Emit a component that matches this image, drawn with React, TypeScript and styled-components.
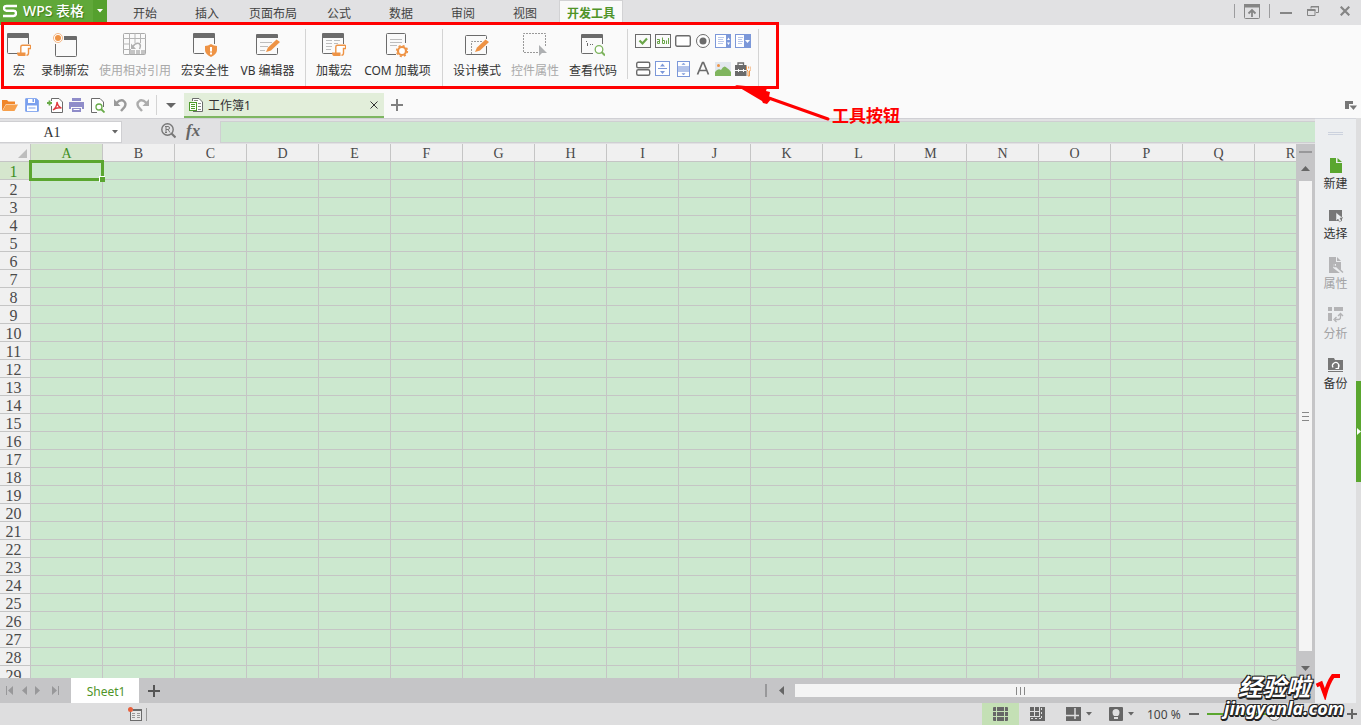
import React from "react";
import styled, { createGlobalStyle, css } from "styled-components";

const ui = '"Noto Sans", "Noto Sans CJK SC", sans-serif';
const GRAY = "#6b6b6b";
const ORANGE = "#ee9345";
const GREEN = "#5aa62f";
const LINE = "#c5c5c5";
const CELL = "#cce8cf";

const Global = createGlobalStyle`
  *, *::before, *::after { box-sizing: border-box; }
  body { margin: 0; font-family: ${ui}; font-size: 12px; color: #333; overflow: hidden; }
  button, input { font: inherit; color: inherit; margin: 0; padding: 0; border: 0; border-radius: 0; background: none; }
  svg { display: block; flex: none; }
`;

const Shell = styled.div`
  position: relative;
  display: flex;
  flex-direction: column;
  height: 100vh;
  overflow: hidden;
  background: #dededf;
`;

/* ---- title bar ---- */
const TitleBar = styled.header`
  display: flex;
  height: 25px;
  flex: none;
  background: #e1e1e3;
`;
const Brand = styled.button`
  display: flex;
  align-items: center;
  gap: 6px;
  width: 93px;
  height: 25px;
  padding: 0 0 4px 3px;
  background: #60a839;
  color: #fff;
  font-size: 14px;
  line-height: 20px;
  font-weight: 500;
  white-space: nowrap;
  text-shadow: 1px 1px 1px #3d7a1c;
`;
const BrandArrow = styled.button`
  display: flex;
  align-items: center;
  justify-content: center;
  width: 14px;
  padding-bottom: 3px;
  background: #55a02e;
`;
const MenuTabs = styled.nav`
  display: flex;
  flex: 1;
  padding: 1px 0 0 7px;
`;
const MenuTab = styled.button<{ $wide?: boolean; $active?: boolean }>`
  width: ${(p) => (p.$wide ? 62 : 54)}px;
  margin: 0 4px;
  padding-top: 2px;
  line-height: 22px;
  white-space: nowrap;
  color: #444;
  ${(p) =>
    p.$active &&
    css`
      background: #fafafa;
      box-shadow: 0 0 0 1px #d2d2d4;
      color: #4f9428;
      font-weight: 700;
    `}
`;
const WindowControls = styled.div`
  display: flex;
  align-items: center;
  height: 22px;
`;
const ControlButton = styled.button<{ $w: number }>`
  display: flex;
  align-items: center;
  justify-content: center;
  width: ${(p) => p.$w}px;
  height: 22px;
  &:last-child {
    margin-left: 4px;
  }
`;
const VRule = styled.span<{ $h: number; $m?: string; $c?: string }>`
  flex: none;
  width: 1px;
  height: ${(p) => p.$h}px;
  margin: ${(p) => p.$m ?? "0"};
  background: ${(p) => p.$c ?? "#d4d4d4"};
`;

/* ---- ribbon ---- */
const Ribbon = styled.div`
  display: flex;
  flex: none;
  height: 65px;
  padding: 4px 0 0 2px;
  background: #fafafa;
`;
const Tool = styled.button<{ $w: number; $off?: boolean }>`
  display: flex;
  flex-direction: column;
  align-items: center;
  flex: none;
  width: ${(p) => p.$w}px;
  padding-top: 3px;
  gap: 4px;
  line-height: 18px;
  white-space: nowrap;
  color: ${(p) => (p.$off ? "#a9a9a9" : "#333")};
`;
const Controls = styled.div`
  display: grid;
  grid-template-columns: repeat(6, 20px);
  grid-template-rows: 24px 32px;
  align-items: center;
  margin: 0 5px;
`;
const SmallTool = styled.button`
  display: flex;
  align-items: center;
  justify-content: center;
  height: 20px;
`;

/* ---- quick access bar ---- */
const QuickBar = styled.div`
  display: flex;
  align-items: center;
  flex: none;
  height: 28px;
  background: #fafafa;
  padding: 2px 4px 0 0;
`;
const QuickButton = styled.button<{ $w?: number }>`
  display: flex;
  align-items: center;
  justify-content: center;
  width: ${(p) => p.$w ?? 22}px;
  height: 22px;
`;
const DocTab = styled.div`
  display: flex;
  align-items: center;
  align-self: flex-end;
  gap: 5px;
  width: 200px;
  height: 25px;
  padding: 0 6px 0 5px;
  background: #e2eeda;
  border-bottom: 2px solid #7eb661;
`;
const DocName = styled.span`
  flex: 1;
`;
const Spacer = styled.span`
  flex: 1;
`;

/* ---- work area ---- */
const Work = styled.main`
  display: flex;
  flex: 1;
  min-height: 0;
`;
const Book = styled.section`
  display: flex;
  flex-direction: column;
  flex: 1;
  min-width: 0;
`;
const FormulaRow = styled.div`
  display: flex;
  flex: none;
  height: 26px;
  padding: 2px 0;
  background: #e1e1e3;
  border-top: 1px solid #d0d0d4;
`;
const NameBox = styled.div`
  display: flex;
  align-items: center;
  width: 122px;
  height: 22px;
  padding-right: 3px;
  border: 1px solid #cfcfd2;
  border-left: 0;
  background: #fff;
`;
const NameInput = styled.input`
  flex: 1;
  min-width: 0;
  padding: 2px 8px 0 0;
  text-align: center;
  font-family: "Liberation Serif", serif;
  font-size: 14px;
`;
const FxTools = styled.div`
  display: flex;
  align-items: center;
  flex: none;
  gap: 10px;
  width: 98px;
  padding: 0 0 2px 39px;
`;
const Fx = styled.button`
  font: italic 700 17px/20px "Liberation Serif", serif;
  color: #666;
`;
const FormulaInput = styled.input`
  flex: 1;
  height: 22px;
  min-width: 0;
  border: 1px solid #cfcfd2;
  border-right: 0;
  background: ${CELL};
`;
const SheetArea = styled.div`
  display: flex;
  flex: 1;
  min-height: 0;
`;
const Viewport = styled.div`
  flex: 1;
  min-width: 0;
  overflow: hidden;
  background: ${CELL};
`;
const Grid = styled.table`
  table-layout: fixed;
  width: 1327px;
  border-collapse: separate;
  border-spacing: 0;
  font-family: "Liberation Serif", serif;
`;
const Corner = styled.th`
  width: 31px;
  height: 18px;
  padding: 5px 3px 3px 18px;
  background: #efefef;
  border: solid ${LINE};
  border-width: 0 1px 1px 0;
`;
const Head = styled.th<{ $on?: boolean }>`
  height: 18px;
  border: solid ${LINE};
  border-width: 0 1px 1px 0;
  background: ${(p) => (p.$on ? "#d5e6cd" : "#f0f0f0")};
  color: ${(p) => (p.$on ? "#3f8f1f" : "#4a4a4a")};
  line-height: 14px;
  font-weight: 400;
`;
const ColHead = styled(Head)`
  padding: 3px 0 0;
  font-size: 14px;
`;
const RowHead = styled(Head)`
  padding: 3px 3px 0 0;
  font-size: 16px;
`;
const Cell = styled.td`
  position: relative;
  height: 18px;
  padding: 0;
  border: solid ${LINE};
  border-width: 0 1px 1px 0;
  background: ${CELL};
`;
const Selection = styled.div`
  position: absolute;
  z-index: 1;
  inset: -2px;
  border: 3px solid ${GREEN};
  &::after {
    content: "";
    position: absolute;
    right: -4px;
    bottom: -4px;
    width: 6px;
    height: 6px;
    background: ${GREEN};
    border: solid #fff;
    border-width: 1px 0 0 1px;
  }
`;
const VScroll = styled.div`
  display: flex;
  flex-direction: column;
  align-items: center;
  flex: none;
  width: 19px;
  padding: 7px 1px 3px 0;
  background: #c5c5c7;
`;
const SplitBar = styled.span`
  width: 13px;
  height: 2px;
  margin-bottom: 9px;
  background: #98989a;
`;
const ScrollArrow = styled.button`
  display: flex;
  align-items: center;
  justify-content: center;
  width: 13px;
  height: 13px;
`;
const VThumb = styled.div`
  display: flex;
  align-items: center;
  justify-content: center;
  flex: 1;
  width: 13px;
  margin: 6px 0 11px;
  background: #f4f4f4;
`;
const SheetBar = styled.div`
  display: flex;
  align-items: center;
  flex: none;
  height: 25px;
  background: #c5c5c7;
`;
const SheetNav = styled.div`
  display: flex;
  flex: none;
  align-items: center;
  width: 71px;
  padding-left: 6px;
`;
const SheetTab = styled.button`
  width: 68px;
  height: 25px;
  padding: 2px 0 0 2px;
  background: #fff;
  color: #4f9428;
`;
const AddSheet = styled.button`
  display: flex;
  align-items: center;
  justify-content: center;
  width: 30px;
  height: 25px;
`;
const HScroll = styled.div`
  display: flex;
  align-items: center;
  flex: 0 1 550px;
`;
const HSplit = styled(SplitBar)`
  width: 2px;
  height: 13px;
  margin: 0 8px 0 0;
`;
const HThumb = styled.div`
  display: flex;
  align-items: center;
  justify-content: center;
  flex: 1;
  height: 13px;
  margin: 0 70px 0 7px;
  background: #f4f4f4;
`;

/* ---- side panel ---- */
const Side = styled.aside`
  display: flex;
  flex-direction: column;
  align-items: center;
  flex: none;
  width: 41px;
  padding-top: 13px;
  background: #eceef0;
  border-top: 1px solid #d4d6dc;
`;
const SideGrip = styled.span`
  width: 15px;
  height: 3px;
  margin-bottom: 21px;
  border: solid #ccd2de;
  border-width: 1px 0;
`;
const SideButton = styled.button<{ $off?: boolean }>`
  display: flex;
  flex-direction: column;
  align-items: center;
  flex: none;
  gap: 1px;
  width: 40px;
  height: 50px;
  line-height: 18px;
  color: ${(p) => (p.$off ? "#a2a2a4" : "#333")};
`;
const Edge = styled.div`
  display: flex;
  flex-direction: column;
  justify-content: center;
  flex: none;
  width: 5px;
  background: #dededf;
`;
const EdgeHandle = styled.button`
  display: flex;
  align-items: center;
  justify-content: flex-end;
  width: 5px;
  height: 101px;
  margin-top: 42px;
  background: ${GREEN};
`;

/* ---- status bar ---- */
const StatusBar = styled.footer`
  display: flex;
  align-items: center;
  flex: none;
  height: 22px;
  padding: 0 4px 0 128px;
  background: #dededf;
`;
const ViewButton = styled.button<{ $on?: boolean; $w: number }>`
  display: flex;
  align-items: center;
  justify-content: center;
  gap: 5px;
  width: ${(p) => p.$w}px;
  height: 22px;
  background: ${(p) => (p.$on ? "#c4e0b5" : "transparent")};
`;
const ZoomLabel = styled.output`
  width: 48px;
  padding-left: 6px;
  white-space: nowrap;
  color: #444;
`;
const ZoomSlider = styled.input`
  appearance: none;
  width: 134px;
  height: 15px;
  margin: 0 6px 0 8px;
  background: linear-gradient(to right, ${GREEN} 50%, #a5a5a7 50%) center / 100% 2px no-repeat;
  &::-webkit-slider-thumb {
    appearance: none;
    width: 13px;
    height: 13px;
    border-radius: 50%;
    border: 1px solid #8a8a8a;
    background: #f4f4f4;
  }
`;

/* ---- annotations over the window ---- */
const RedFrame = styled.div`
  position: absolute;
  left: 1px;
  top: 22px;
  width: 778px;
  height: 67px;
  border: 3px solid #f00;
  pointer-events: none;
`;
const Arrow = styled.svg`
  position: absolute;
  left: 730px;
  top: 84px;
`;
const Note = styled.span`
  position: absolute;
  left: 832px;
  top: 102px;
  font: 700 17px/26px "Noto Sans CJK SC", sans-serif;
  color: #f00;
`;
const Watermark = styled.div`
  position: absolute;
  right: 15px;
  bottom: 9px;
  width: 124px;
  color: #fff;
  font-style: italic;
  font-weight: 700;
  white-space: nowrap;
  text-shadow: -1px -1px 0 #222, 1px -1px 0 #222, -1px 1px 0 #222, 1px 1px 0 #222, 0 2px 0 #222, 1px 2px 0 #222;
`;
const MarkTop = styled.div`
  display: flex;
  align-items: center;
  gap: 5px;
  padding-left: 16px;
  font-size: 24px;
  line-height: 26px;
`;
const MarkBottom = styled.div`
  padding-left: 2px;
  font-size: 18px;
  line-height: 16px;
`;

/* ---- drawings ---- */
type Draw = { w?: number; h?: number; children: React.ReactNode };
const Ico = ({ w = 24, h = 26, children }: Draw) => (
  <svg width={w} height={h} viewBox={`0 0 ${w} ${h}`} fill="none" aria-hidden="true">
    {children}
  </svg>
);

const Win = () => (
  <g>
    <path d="M.5 6V20.500a1 1 0 0 0 1 1H11M21.500 6V12" stroke={GRAY} />
    <path d="M0 2q0-1 1-1H21q1 0 1 1V6H0z" fill={GRAY} />
  </g>
);
const Scroll = () => (
  <g>
    <path d="M15 13.500h8v3h-2v5.500H14V14.500z" fill="#fff" />
    <path d="M13.800 21.500V15q0-1.700 1.700-1.700h7q1.200 0 1.200 1.500v1.700h-2.200v4.500q0 2.200-2 2.200" stroke={ORANGE} strokeWidth="1.400" />
    <path d="M10 20.500h8.500v3.500H11.500Q10 23.500 10 20.500z" fill={ORANGE} />
  </g>
);
const Pencil = () => <path d="M10 20l2-4.500L20.500 7.500l3.500 2.500L15 18.500z" fill={ORANGE} />;

const MacroIcon = () => (<Ico><Win /><Scroll /></Ico>);
const RecordIcon = () => (
  <Ico>
    <path d="M2.500 12V23.500a1 1 0 0 0 1 1H22.500a1 1 0 0 0 1-1V5" stroke={GRAY} />
    <path d="M11 4H23q1 0 1 1V8H11z" fill={GRAY} />
    <circle cx="5" cy="6" r="4.500" stroke="#f3b786" fill="#fff" />
    <circle cx="5" cy="6" r="3" fill={ORANGE} />
  </Ico>
);
const RelativeIcon = () => (
  <Ico>
    <rect x=".5" y="1.500" width="22" height="21" rx="1" stroke="#a9a9a9" />
    <path d="M6.500 1V23M12 1V11M17.500 1V11M0 6.500H23M0 12H7M0 17.500H8" stroke="#b5b5b5" />
    <path d="M7 18h5v4H7zM13 18h4v4h-4zM18 18h4v4h-4z" fill="#c4c4c4" />
    <path d="M9.500 15Q12.500 10.500 16 11.500 18.500 13 16.500 17" stroke="#b0b0b0" strokeWidth="1.500" />
    <path d="M8 11.500V17h5z" fill="#b0b0b0" />
  </Ico>
);
const SecurityIcon = () => (
  <Ico>
    <Win />
    <path d="M18 12q3 2 6 2v4q0 4-6 7-6-3-6-7v-4q3 0 6-2z" fill={ORANGE} />
    <path d="M17 15h2v4.500h-2zM17 20.500h2v2h-2z" fill="#fff" />
  </Ico>
);
const VbIcon = () => (
  <Ico>
    <path d="M.5 6V21.500a1 1 0 0 0 1 1H20.500a1 1 0 0 0 1-1V16" stroke={GRAY} />
    <path d="M0 3q0-1 1-1H21q1 0 1 1V6H0z" fill={GRAY} />
    <path d="M4 10.500H16M4 14.500H12M4 18.500H9" stroke="#bdbdbd" />
    <Pencil />
  </Ico>
);
const AddInIcon = () => (
  <Ico>
    <Win />
    <path d="M4 8.500h6M12 8.500h6M4 11.500h6M12 11.500h4M4 14.500h6M4 17.500h5" stroke="#bdbdbd" />
    <Scroll />
  </Ico>
);
const ComIcon = () => (
  <Ico>
    <path d="M10 22.500H1.500a1 1 0 0 1-1-1V2.500a1 1 0 0 1 1-1H18.500a1 1 0 0 1 1 1V11" stroke={GRAY} />
    <path d="M4 7.500H16M4 10.500H16M4 13.500H11" stroke="#bdbdbd" />
    <circle cx="16" cy="19" r="4" stroke={ORANGE} strokeWidth="2.200" fill="#fff" />
    <circle cx="16" cy="19" r="5.400" stroke={ORANGE} strokeWidth="1.500" strokeDasharray="2.100 2.140" />
  </Ico>
);
const DesignIcon = () => (
  <Ico>
    <path d="M21.500 14V21.500a1 1 0 0 1-1 1H1.500a1 1 0 0 1-1-1V4.500a1 1 0 0 1 1-1H20.500a1 1 0 0 1 1 1V7" stroke={GRAY} />
    <path d="M6.500 22V9.500H18" stroke="#9a9a9a" strokeDasharray="2 1" />
    <Pencil />
  </Ico>
);
const PropIcon = () => (
  <Ico>
    <path d="M15 20.500H.5V1.500H22.500V15" stroke="#999" strokeDasharray="2 1" />
    <path d="M16 13v11l3-3h5z" fill="#aeb0b2" />
  </Ico>
);
const CodeIcon = () => (
  <Ico>
    <path d="M.5 6V20.500a1 1 0 0 0 1 1H12M21.500 6V12" stroke={GRAY} />
    <path d="M0 3q0-1 1-1H21q1 0 1 1V6H0z" fill={GRAY} />
    <path d="M5.500 9v1M6.500 11v3M9 12.500h1M11 12.500h1" stroke={GRAY} />
    <circle cx="18" cy="17.500" r="3.800" stroke="#7cb35c" strokeWidth="1.300" fill="#fff" />
    <path d="M20.500 20l3.500 3.500" stroke="#7cb35c" strokeWidth="2" />
  </Ico>
);

const BLUE = "#7c98d9";
const smallIcons: { name: string; draw: React.ReactNode }[] = [
  { name: "复选框", draw: <><rect x=".5" y="1.500" width="15" height="13" stroke={GRAY} /><path d="M4.500 7.500l3 3 4.500-5" stroke="#69a548" strokeWidth="2.200" /></> },
  { name: "文本框", draw: <><rect x=".5" y="1.500" width="15" height="13" stroke={GRAY} /><path d="M2 6.500h2.500v4H2.500V8.500h2M7.500 4.500V10.500H9.500V7.500H7.500M11.500 7.500V11M13.500 5V11" stroke="#69a548" /></> },
  { name: "按钮", draw: <rect x=".7" y="2.700" width="14.600" height="10.600" rx="1.500" stroke={GRAY} strokeWidth="1.400" fill="#fff" /> },
  { name: "单选按钮", draw: <><circle cx="8" cy="8" r="6.500" stroke={GRAY} fill="#fff" /><circle cx="8" cy="8" r="3.500" fill={GRAY} /></> },
  { name: "列表框", draw: <><rect x=".5" y="1.500" width="15" height="13" stroke={BLUE} fill="#fff" /><path d="M11 1h5v14h-5z" fill={BLUE} /><path d="M3 4.500h6M3 6.500h5M3 8.500h6M3 10.500h5" stroke="#b9c7ea" /><path d="M12 7l1.500-2.500L15 7zM12 9.500h3L13.500 12z" fill="#fff" /></> },
  { name: "组合框", draw: <><rect x=".5" y="1.500" width="15" height="13" stroke={BLUE} fill="#fff" /><path d="M9 1h7v14H9z" fill={BLUE} /><path d="M3 4.500h5M3 6.500h4M3 8.500h5M3 10.500h4" stroke="#b9c7ea" /><path d="M10 7h5l-2.500 3z" fill="#fff" /></> },
  { name: "切换按钮", draw: <><rect x="1.700" y="1.200" width="13" height="5.600" rx="1.500" stroke={GRAY} strokeWidth="1.400" fill="#fff" /><rect x="1.700" y="8.700" width="13" height="5.600" rx="1.500" stroke={GRAY} strokeWidth="1.400" fill="#fff" /></> },
  { name: "数值调节钮", draw: <><rect x=".5" y=".5" width="14" height="14" stroke={BLUE} fill="#fff" /><path d="M3 7.500h9" stroke={BLUE} /><path d="M5 5.500l2.500-3L10 5.500zM5 10h5l-2.500 3z" fill={BLUE} /></> },
  { name: "滚动条", draw: <><rect x="2.500" y=".5" width="12" height="15" stroke={BLUE} fill="#fff" /><path d="M3 5h11v6H3z" fill="#b4c4ea" /><path d="M7 3.500l1.500-1.500L10 3.500zM7 12.500h3l-1.500 1.500z" fill={BLUE} stroke={BLUE} strokeWidth=".5" /></> },
  { name: "标签", draw: <path d="M2.500 13.500L7.500 1.500h1L13.500 13.500M4.500 9.500h7" stroke={GRAY} strokeWidth="1.700" /> },
  { name: "图像", draw: <><path d="M0 1h16v10H0z" fill="#e3e8ef" /><circle cx="3.500" cy="4.500" r="1.500" fill={ORANGE} /><path d="M0 15v-4q3-4 6-2 3-6 6-2 2 1 4 4v4z" fill="#80b55e" /></> },
  { name: "其他控件", draw: <><path d="M0 4h11.500v11H0z" fill={GRAY} /><path d="M3 4V2h5.500v2" stroke={GRAY} strokeWidth="1.300" /><path d="M0 9.500h11.500M3.500 8v3M8.500 8v3" stroke="#fafafa" /><path d="M11.500 5.500v3l1.500 1.500v5h1.500v-5L16 8.500v-3M13.700 5.500v2" stroke={ORANGE} /></> },
];

const Tri = ({ d, w, h, c = "#666" }: { d: string; w: number; h: number; c?: string }) => (
  <Ico w={w} h={h}><path d={d} fill={c} /></Ico>
);
const Down = ({ c }: { c?: string }) => <Tri w={6} h={4} d="M0 0h6L3 3.500z" c={c} />;

const tabs = ["开始", "插入", "页面布局", "公式", "数据", "审阅", "视图", "开发工具"];
const columns = "ABCDEFGHIJKLMNOPQR".split("");
const rows = Array.from({ length: 29 }, (_, i) => i + 1);

export default function App() {
  return (
    <Shell>
      <Global />
      <TitleBar>
        <Brand>
          <Ico w={14} h={14}>
            <path d="M14 2H3.500Q1 2 1 4.200T3.500 6.700H10.500Q13 6.700 13 9.200T10.500 12H0" stroke="#fff" strokeWidth="2.400" />
          </Ico>
          WPS 表格
        </Brand>
        <BrandArrow aria-label="主菜单"><Down c="#fff" /></BrandArrow>
        <MenuTabs>
          {tabs.map((t) => (
            <MenuTab key={t} $wide={t.length > 2} $active={t === "开发工具"}>{t}</MenuTab>
          ))}
        </MenuTabs>
        <WindowControls>
          <VRule $h={14} $c="#9c9c9e" />
          <ControlButton $w={34} aria-label="功能区">
            <Ico w={16} h={15}>
              <rect x=".5" y=".5" width="15" height="14" rx="1" stroke="#858585" />
              <path d="M0 0h16v3.500H0z" fill="#858585" />
              <path d="M8 13V6.500M4.500 9.500L8 6l3.500 3.500" stroke="#858585" strokeWidth="1.800" />
            </Ico>
          </ControlButton>
          <VRule $h={14} $c="#9c9c9e" />
          <ControlButton $w={31} aria-label="最小化"><Ico w={12} h={6}><path d="M0 4h12v2H0z" fill="#858585" /></Ico></ControlButton>
          <ControlButton $w={24} aria-label="还原">
            <Ico w={12} h={10}>
              <path d="M4 2.500V.5H11.500V6.500H9" stroke="#858585" /><path d="M.5 4H8V9.500H.5z" stroke="#858585" /><path d="M0 3h8.500v2H0zM4 0h8v1.500H4z" fill="#858585" />
            </Ico>
          </ControlButton>
          <ControlButton $w={32} aria-label="关闭"><Ico w={10} h={10}><path d="M.7.7l8.600 8.600M9.300.7L.7 9.300" stroke="#858585" strokeWidth="2.200" /></Ico></ControlButton>
        </WindowControls>
      </TitleBar>

      <Ribbon>
        <Tool $w={34}><MacroIcon />宏</Tool>
        <Tool $w={58}><RecordIcon />录制新宏</Tool>
        <Tool $w={82} $off><RelativeIcon />使用相对引用</Tool>
        <Tool $w={58}><SecurityIcon />宏安全性</Tool>
        <Tool $w={67}><VbIcon />VB 编辑器</Tool>
        <VRule $h={57} $m="0 5px 0 4px" />
        <Tool $w={46}><AddInIcon />加载宏</Tool>
        <Tool $w={81}><ComIcon />COM 加载项</Tool>
        <VRule $h={57} $m="0 5px 0 4px" />
        <Tool $w={58}><DesignIcon />设计模式</Tool>
        <Tool $w={58} $off><PropIcon />控件属性</Tool>
        <Tool $w={58}><CodeIcon />查看代码</Tool>
        <VRule $h={50} $m="0 0 0 5px" />
        <Controls>
          {smallIcons.map((s) => (
            <SmallTool key={s.name} aria-label={s.name}><Ico w={16} h={16}>{s.draw}</Ico></SmallTool>
          ))}
        </Controls>
        <VRule $h={57} />
      </Ribbon>

      <QuickBar>
        <QuickButton $w={20} aria-label="打开">
          <Ico w={16} h={14}><path d="M0 13V2h5l1.500 1.500H13V6H4z" fill="#f0862a" /><path d="M4 6.500h12L12.500 13H.5z" fill="#f7a04b" /></Ico>
        </QuickButton>
        <QuickButton $w={24} aria-label="保存">
          <Ico w={14} h={14}><path d="M.7.700h10.800l1.800 1.800v10.800H.7z" fill="#7ba0ee" stroke="#7ba0ee" /><path d="M3 1h7v4H3zM2 7.500h10V13H2z" fill="#fff" /><path d="M7.500 1h1.500v3H7.500zM3.500 9.500h7v1h-7z" fill="#7ba0ee" /></Ico>
        </QuickButton>
        <QuickButton aria-label="输出为PDF">
          <Ico w={16} h={15}><path d="M4.500 3V.5H12l3.500 3.500v10.500H4.500V8" stroke={GRAY} fill="#fff" /><path d="M0 5h5M2.500 2.500v5" stroke="#68ab48" strokeWidth="1.800" /><path d="M6 12q4-3 4-8 1 5 4.500 6-5-1-8.500 2z" stroke="#e0393e" strokeWidth="1.300" /></Ico>
        </QuickButton>
        <QuickButton $w={20} aria-label="打印">
          <Ico w={15} h={14}><path d="M3 0h9v3H3zM0 4h15v7h-2V9H2v2H0zM3 10h9v4H3z" fill="#8f8cc9" /><path d="M4.500 11.500h6" stroke="#fff" /></Ico>
        </QuickButton>
        <QuickButton $w={24} aria-label="打印预览">
          <Ico w={14} h={15}><path d="M6 14.500H.5V.5H9L12.500 4v5" stroke={GRAY} fill="#fff" /><circle cx="8" cy="9" r="3" stroke="#68ab48" strokeWidth="1.300" fill="#fff" /><path d="M10 11l3.500 3.500" stroke="#68ab48" strokeWidth="1.800" /></Ico>
        </QuickButton>
        <QuickButton $w={20} aria-label="撤销">
          <Ico w={13} h={14}><path d="M2.500 5Q6 1.500 9 2.500q4 2.500 1.500 6.500L7 13" stroke="#9a9a9a" strokeWidth="2.400" /><path d="M0 1v7h6.500z" fill="#9a9a9a" /></Ico>
        </QuickButton>
        <QuickButton $w={24} aria-label="恢复">
          <Ico w={13} h={14}><path d="M10.500 5Q7 1.500 4 2.500Q0 5 2.500 9L6 13" stroke="#acacac" strokeWidth="2.400" /><path d="M13 1v7H6.500z" fill="#acacac" /></Ico>
        </QuickButton>
        <VRule $h={20} $m="0 0 0 2px" />
        <QuickButton $w={27} aria-label="更多"><Tri w={10} h={5} d="M0 0h10L5 5z" /></QuickButton>
        <DocTab>
          <Ico w={14} h={14}>
            <path d="M3.500 3V.5H10L13.500 4v9.500H4" stroke={GRAY} fill="#fff" /><path d="M9 5.500h3M9 8.500h3M9 11.500h3M5 2.500h4" stroke="#8a8a8a" />
            <rect x=".5" y="4.500" width="7" height="8" fill="#fff" stroke="#4e9a2c" /><path d="M2 6.500h4M2 8.500h4M2 10.500h4" stroke="#4e9a2c" />
          </Ico>
          <DocName>工作簿1</DocName>
          <button aria-label="关闭工作簿"><Ico w={8} h={8}><path d="M.5.5l7 7M7.500.5l-7 7" stroke="#333" /></Ico></button>
        </DocTab>
        <QuickButton $w={26} aria-label="新建标签"><Ico w={12} h={12}><path d="M6 0v12M0 6h12" stroke="#808080" strokeWidth="2" /></Ico></QuickButton>
        <Spacer />
        <button aria-label="窗口列表"><Ico w={12} h={11}><path d="M0 1h8v3H4v5H0z" fill="#777" /><path d="M4.500 5.500h7.500L8.500 10z" fill="#777" /></Ico></button>
      </QuickBar>

      <Work>
        <Book>
          <FormulaRow>
            <NameBox>
              <NameInput aria-label="名称框" defaultValue="A1" />
              <Down />
            </NameBox>
            <FxTools>
              <button aria-label="查找">
                <Ico w={15} h={16}><circle cx="6.500" cy="6.500" r="5.700" stroke="#777" strokeWidth="1.400" /><path d="M10.500 10.500l4 4" stroke="#777" strokeWidth="2.200" /><path d="M5 9.500v-6h2q1.500 0 1.500 1.500T7 6.500H5M7 6.500l2 3M4 3.500h1M4 9.500h2" stroke="#777" /></Ico>
              </button>
              <Fx aria-label="插入函数">fx</Fx>
            </FxTools>
            <FormulaInput aria-label="编辑栏" />
          </FormulaRow>
          <SheetArea>
            <Viewport>
              <Grid>
                <thead>
                  <tr>
                    <Corner aria-label="全选"><Ico w={9} h={9}><path d="M9 0v9H0z" fill="#bdbdbd" /></Ico></Corner>
                    {columns.map((c) => (<ColHead key={c} scope="col" $on={c === "A"}>{c}</ColHead>))}
                  </tr>
                </thead>
                <tbody>
                  {rows.map((r) => (
                    <tr key={r}>
                      <RowHead scope="row" $on={r === 1}>{r}</RowHead>
                      {columns.map((c) => (<Cell key={c}>{r === 1 && c === "A" && <Selection />}</Cell>))}
                    </tr>
                  ))}
                </tbody>
              </Grid>
            </Viewport>
            <VScroll>
              <SplitBar />
              <ScrollArrow aria-label="向上滚动"><Tri w={9} h={5} d="M0 5L4.500 0 9 5z" /></ScrollArrow>
              <VThumb><Ico w={7} h={9}><path d="M0 .5h7M0 4.500h7M0 8.500h7" stroke="#888" /></Ico></VThumb>
              <ScrollArrow aria-label="向下滚动"><Tri w={9} h={5} d="M0 0h9L4.500 5z" /></ScrollArrow>
            </VScroll>
          </SheetArea>
          <SheetBar>
            <SheetNav>
              <QuickButton $w={8} aria-label="第一个"><Tri w={8} h={9} d="M0 0h1v9H0zM7 0v9L2 4.500z" c="#98989a" /></QuickButton>
              <QuickButton $w={22} aria-label="上一个"><Tri w={5} h={9} d="M5 0v9L0 4.500z" c="#98989a" /></QuickButton>
              <QuickButton $w={5} aria-label="下一个"><Tri w={5} h={9} d="M0 0v9l5-4.500z" c="#98989a" /></QuickButton>
              <QuickButton $w={32} aria-label="最后一个"><Tri w={8} h={9} d="M0 0v9l5-4.500zM6 0h1v9H6z" c="#98989a" /></QuickButton>
            </SheetNav>
            <SheetTab>Sheet1</SheetTab>
            <AddSheet aria-label="新建工作表"><Ico w={12} h={12}><path d="M6 0v12M0 6h12" stroke="#555" strokeWidth="2" /></Ico></AddSheet>
            <Spacer />
            <HScroll>
              <HSplit />
              <ScrollArrow aria-label="向左滚动"><Tri w={5} h={9} d="M5 0v9L0 4.500z" /></ScrollArrow>
              <HThumb><Ico w={9} h={8}><path d="M.5 0v8M4.500 0v8M8.500 0v8" stroke="#888" /></Ico></HThumb>
            </HScroll>
          </SheetBar>
        </Book>
        <Side>
          <SideGrip />
          <SideButton>
            <Ico w={16} h={18}><path d="M2 2h6v5h6v10H2z" fill={GREEN} /><path d="M9.500 2l4.500 4H9.500z" fill={GREEN} /></Ico>
            新建
          </SideButton>
          <SideButton>
            <Ico w={16} h={18}><path d="M1 4h13v11H1z" fill="#777" /><path d="M8 6.500v8.500l2-2 1.500 3 2-1-1.500-3h3z" fill="#eceef0" stroke="#777" strokeWidth=".5" /></Ico>
            选择
          </SideButton>
          <SideButton $off>
            <Ico w={16} h={18}><path d="M1 1h7v5h5v11H1z" fill="#b4b4b6" /><path d="M9 1l4 4H9z" fill="#b4b4b6" /><path d="M6.500 8v3l2 1.500 6.500 5" stroke="#eceef0" strokeWidth="3" /><path d="M6 7.500v3h3V8M9 11l6 5.500" stroke="#b4b4b6" strokeWidth="1.600" /></Ico>
            属性
          </SideButton>
          <SideButton $off>
            <Ico w={16} h={18}><path d="M0 1h4v4H0zM6 1h9v4H6zM0 7h4v8H0z" fill="#b4b4b6" /><path d="M12.500 8v3q0 2.500-2 2.500H7M10 10l2.500-2.500L15 10M8.500 11L6 13.500 8.500 16" stroke="#b4b4b6" strokeWidth="1.300" /></Ico>
            分析
          </SideButton>
          <SideButton>
            <Ico w={16} h={18}><path d="M0 2h6l1 2h8v10H0zM0 15h15v1H0z" fill="#777" /><path d="M5 11.500a3.200 3.200 0 1 1 5 .5M10.500 9v3.500H7.500" stroke="#fff" strokeWidth="1.200" /></Ico>
            备份
          </SideButton>
        </Side>
        <Edge>
          <EdgeHandle aria-label="展开侧栏"><Tri w={4} h={7} d="M0 0v7l4-3.500z" c="#fff" /></EdgeHandle>
        </Edge>
      </Work>

      <StatusBar>
        <button aria-label="录制宏">
          <Ico w={18} h={15}>
            <rect x="2.500" y="2.500" width="11" height="11" stroke={GRAY} fill="#e8e8e8" /><path d="M5 2h9v2H5z" fill={GRAY} />
            <path d="M4 6.500h3M9 6.500h3M4 8.500h3M9 8.500h3M4 10.500h3M9 10.500h3" stroke="#999" /><circle cx="2.500" cy="2.500" r="2.500" fill="#e8603c" />
          </Ico>
        </button>
        <VRule $h={13} $c="#999" />
        <Spacer />
        <ViewButton $on $w={37} aria-label="普通视图">
          <Ico w={15} h={14}><rect width="15" height="14" rx="1" fill="#666" /><path d="M0 4.500h15M0 9.500h15M3.500 0v14M11.500 0v14" stroke="#c4e0b5" /></Ico>
        </ViewButton>
        <ViewButton $w={37} aria-label="分页预览">
          <Ico w={15} h={14}><rect width="15" height="14" fill="#666" /><path d="M0 4.500h10M0 9.500h10M4.500 0v9M9.500 0v9" stroke="#dededf" /><path d="M11.500 1v10M1 11.500h11" stroke="#dededf" strokeDasharray="2 2" /></Ico>
        </ViewButton>
        <ViewButton $w={46} aria-label="阅读模式">
          <Ico w={15} h={14}><rect width="15" height="14" fill="#666" /><path d="M0 8.500h13M9 1v11" stroke="#dededf" strokeWidth="1.500" /></Ico><Down />
        </ViewButton>
        <ViewButton $w={39} aria-label="护眼模式">
          <Ico w={14} h={14}><rect width="14" height="14" rx="1" fill="#666" /><path d="M5 9Q3.500 7.500 3.500 5.500a3.500 3.500 0 0 1 7 0Q10.500 7.500 9 9zM5 10h4v2H5z" fill="#dededf" /></Ico><Down />
        </ViewButton>
        <ZoomLabel>100 %</ZoomLabel>
        <button aria-label="缩小"><Ico w={10} h={12}><path d="M0 6h10" stroke="#666" strokeWidth="2" /></Ico></button>
        <ZoomSlider type="range" aria-label="显示比例" defaultValue={50} />
        <button aria-label="放大"><Ico w={10} h={12}><path d="M0 6h10M5 1v10" stroke="#666" strokeWidth="2" /></Ico></button>
      </StatusBar>

      <RedFrame />
      <Arrow width="104" height="40" viewBox="0 0 104 40" aria-hidden="true">
        <path d="M5 1L37 4l-1 3 4 1-1 5 3 1-5 6-4-1-1-2z" fill="#f00" />
        <path d="M36 13L98 35" stroke="#f00" strokeWidth="3" strokeLinecap="round" />
      </Arrow>
      <Note>工具按钮</Note>
      <Watermark>
        <MarkTop>
          经验啦
          <svg width="26" height="26" viewBox="0 0 26 26" fill="none" aria-hidden="true">
            <path d="M1.500 11.500l4.500-2 4 11Q13 9 18 2h7" stroke="#f00" strokeWidth="4" />
          </svg>
        </MarkTop>
        <MarkBottom>jingyanla.com</MarkBottom>
      </Watermark>
    </Shell>
  );
}
